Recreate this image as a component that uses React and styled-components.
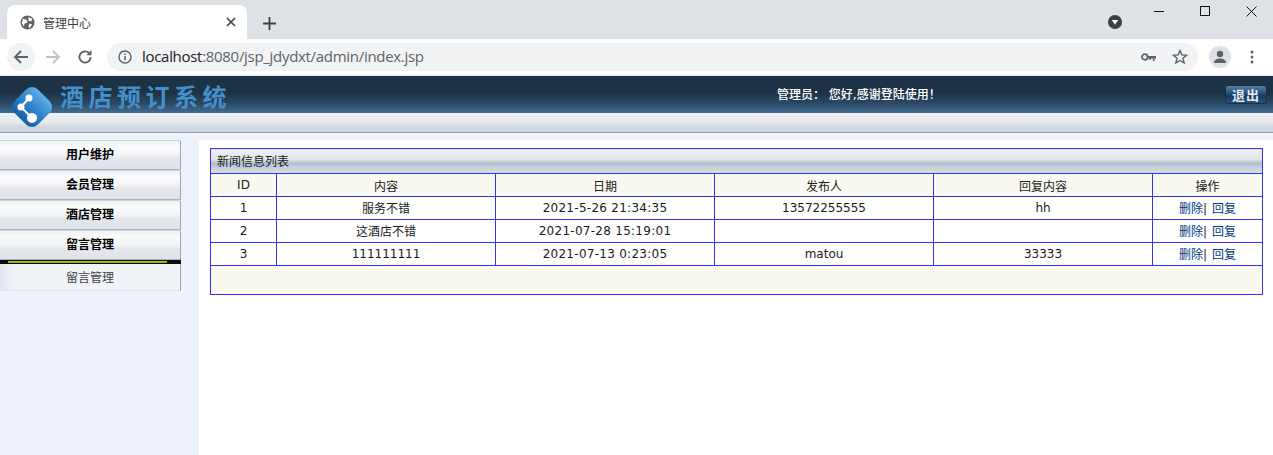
import React from "react";
import styled, { createGlobalStyle } from "styled-components";

const CJK = `"Noto Sans CJK SC", sans-serif`;
const BODY_FONT = `"DejaVu Sans", "Noto Sans CJK SC", sans-serif`;

const GlobalStyle = createGlobalStyle`
  html, body {
    margin: 0;
    padding: 0;
    background: #eef2fb;
    overflow: hidden;
  }
`;

const Page = styled.div`
  width: 1273px;
  height: 455px;
  display: flex;
  flex-direction: column;
  overflow: hidden;
  font-family: ${BODY_FONT};
`;

/* browser chrome */
const TabStrip = styled.div`
  height: 39px;
  flex: none;
  background: #dee1e6;
  display: flex;
  align-items: flex-end;
  padding-left: 7px;
`;

const Tab = styled.div`
  width: 240px;
  height: 34px;
  box-sizing: border-box;
  background: #fff;
  border-radius: 8px 8px 0 0;
  display: flex;
  align-items: center;
  padding: 0 11px 0 13px;
  gap: 8px;
  font: 12px ${CJK};
  color: #3c4043;
`;

const TabTitle = styled.span`
  flex: 1;
`;

const NewTab = styled.div`
  width: 24px;
  height: 24px;
  margin: 0 0 4px 10px;
  display: flex;
  align-items: center;
  justify-content: center;
`;

const StripRight = styled.div`
  margin-left: auto;
  margin-right: -1px;
  align-self: stretch;
  display: flex;
  align-items: flex-start;
`;

const MediaDot = styled.div`
  margin: 15px 14px 0 0;
  display: flex;
`;

const WinButton = styled.div`
  width: 46px;
  height: 22px;
  display: flex;
  align-items: center;
  justify-content: center;
`;

const Toolbar = styled.div`
  height: 37px;
  flex: none;
  box-sizing: border-box;
  background: #fff;
  border-bottom: 1px solid #e4e6ea;
  display: flex;
  align-items: center;
  padding: 0 7px;
`;

const NavButton = styled.div`
  width: 28px;
  height: 28px;
  margin-right: 4px;
  border-radius: 50%;
  background: ${(p) => (p.$hover ? "#f1f3f4" : "transparent")};
  display: flex;
  align-items: center;
  justify-content: center;
`;

const Omnibox = styled.div`
  width: 1091px;
  height: 28px;
  margin-left: 4px;
  box-sizing: border-box;
  background: #f1f3f4;
  border-radius: 14px;
  display: flex;
  align-items: center;
  padding: 0 10px 0 11px;
  gap: 10px;
`;

const UrlText = styled.span`
  flex: 1;
  font: 15px/20px "Open Sans", sans-serif;
  letter-spacing: -0.3px;
  color: #5f6368;
  margin-top: -2px;
`;

const UrlHost = styled.span`
  color: #202124;
`;

const OmniIcons = styled.div`
  display: flex;
  align-items: center;
  gap: 16px;
`;

const ToolbarRight = styled.div`
  margin-left: 11px;
  display: flex;
  align-items: center;
  gap: 19px;
`;

const Avatar = styled.div`
  width: 22px;
  height: 22px;
  border-radius: 50%;
  background: #dee1e6;
  display: flex;
  align-items: center;
  justify-content: center;
`;

/* site header */
const Banner = styled.header`
  height: 37px;
  flex: none;
  background: linear-gradient(#1d3345 0, #1d3345 45%, #2a4a66 75%, #446c92 100%);
  position: relative;
`;

const SubBar = styled.div`
  height: 20px;
  flex: none;
  box-sizing: border-box;
  background: linear-gradient(#f0f1f4 0, #e5e8ed 50%, #d2d9e2 70%, #cfd6e0 100%);
  border-bottom: 1px solid #8d9db4;
`;

const Logo = styled.svg`
  position: absolute;
  left: 11px;
  top: 10px;
  z-index: 1;
`;

const Brand = styled.div`
  padding: 3px 0 0 60px;
  font: 700 24px/34px ${CJK};
  letter-spacing: 4.5px;
  color: #4590ca;
  white-space: nowrap;
`;

const Greeting = styled.div`
  position: absolute;
  left: 777px;
  top: 11px;
  font: 500 12px/16px ${BODY_FONT};
  color: #fff;
  white-space: pre;
`;

const LogoutButton = styled.div`
  position: absolute;
  left: 1225px;
  top: 9px;
  width: 42px;
  height: 19px;
  box-sizing: border-box;
  border: 1px solid #14304e;
  border-radius: 3px;
  background: linear-gradient(#5c7fa3 0, #2c5279 40%, #153a60 60%, #27507a 100%);
  color: #dfeaf5;
  font: 700 13px/17px ${CJK};
  letter-spacing: 1px;
  text-align: center;
`;

/* body */
const Content = styled.div`
  flex: 1;
  display: flex;
  min-height: 0;
  padding-top: 7px;
`;

const Sidebar = styled.aside`
  width: 199px;
  flex: none;
`;

const MenuHeader = styled.div`
  width: 181px;
  height: 30px;
  box-sizing: border-box;
  border: 1px solid #c9d0de;
  border-left: 0;
  border-right-color: #9aa5b5;
  border-bottom-color: #a9b3c3;
  border-radius: 0 2px 0 0;
  background: linear-gradient(#f0f1f4 0, #fbfbfc 20%, #f3f4f6 50%, #e4e7ec 62%, #dfe3e9 100%);
  font: 700 12px/28px ${BODY_FONT};
  color: #000;
  text-align: center;
`;

const MenuDivider = styled.div`
  width: 181px;
  height: 4px;
  box-sizing: border-box;
  padding: 1px 0 0 8px;
  background: #0c0c0c;
`;

const DividerGlow = styled.div`
  width: 159px;
  height: 2px;
  background: linear-gradient(#c2ea00, #6f8e00);
`;

const MenuItem = styled.div`
  width: 181px;
  height: 27px;
  box-sizing: border-box;
  border-right: 1px solid #9aa5b5;
  border-bottom: 1px solid #dfe4ec;
  background: linear-gradient(90deg, #e2e6ec 0, #f0f3f8 14px, #f0f3f8 100%);
  font: 12px/28px ${BODY_FONT};
  color: #444;
  text-align: center;
`;

const Main = styled.main`
  flex: 1;
  background: #fff;
  padding: 8px 10px 0 11px;
`;

const Grid = styled.table`
  width: 1052px;
  border-collapse: collapse;
  table-layout: fixed;
  font: 12px ${BODY_FONT};
  color: #1a1a1a;

  td, th {
    border: 1px solid #3333ff;
    padding: 0;
    text-align: center;
    font-weight: 400;
  }
`;

const TitleCell = styled.td`
  && {
    height: 22px;
    text-align: left;
    padding: 0 0 2px 6px;
    background: linear-gradient(#eef1f4 0, #e0e5ea 42%, #adbcc6 58%, #c0ced6 70%, #d6e2e8 100%);
    color: #222;
  }
`;

const HeadCell = styled.th`
  height: 22px;
  background: #f9f9f1;
`;

const BodyCell = styled.td`
  && {
    height: 21px;
    padding-bottom: 1px;
    letter-spacing: ${(p) => (p.$wide ? "0.27px" : "0")};
    word-spacing: ${(p) => (p.$actions ? "1px" : "0")};
  }
  background: #fff;
`;

const FootCell = styled.td`
  height: 28px;
  background: #f9f9f1;
`;

const ActionLink = styled.a`
  color: #003a80;
  text-decoration: none;
`;

const columns = [
  { name: "ID", width: 66 },
  { name: "内容", width: 219 },
  { name: "日期", width: 219 },
  { name: "发布人", width: 219 },
  { name: "回复内容", width: 219 },
  { name: "操作", width: 110 },
];

const rows = [
  ["1", "服务不错", "2021-5-26 21:34:35", "13572255555", "hh"],
  ["2", "这酒店不错", "2021-07-28 15:19:01", "", ""],
  ["3", "111111111", "2021-07-13 0:23:05", "matou", "33333"],
];

const menus = ["用户维护", "会员管理", "酒店管理", "留言管理"];

const App = () => {
  return (
    <Page>
      <GlobalStyle />
      <TabStrip>
        <Tab>
          <svg width="15" height="15" viewBox="0 0 16 16">
            <circle cx="8" cy="8" r="7.5" fill="#5f6368" />
            <path d="M3 4l4 1 1 3-3 1-1 3-2-3zM9 2l4 2-1 3-3-1zM10 9l3 1-3 4-1-2z" fill="#fff" />
          </svg>
          <TabTitle>管理中心</TabTitle>
          <svg width="10" height="10" viewBox="0 0 10 10">
            <path d="M1 1l8 8M9 1l-8 8" stroke="#3c4043" strokeWidth="1.6" />
          </svg>
        </Tab>
        <NewTab>
          <svg width="13" height="13" viewBox="0 0 13 13">
            <path d="M6.5 0v13M0 6.5h13" stroke="#3c4043" strokeWidth="1.8" />
          </svg>
        </NewTab>
        <StripRight>
          <MediaDot>
            <svg width="14" height="14" viewBox="0 0 14 14">
              <circle cx="7" cy="7" r="7" fill="#3c4043" />
              <path d="M3.6 5h6.8L7 9.6z" fill="#fff" />
            </svg>
          </MediaDot>
          <WinButton>
            <svg width="10" height="10" viewBox="0 0 10 10">
              <path d="M0 5.5h10" stroke="#111" />
            </svg>
          </WinButton>
          <WinButton>
            <svg width="10" height="10" viewBox="0 0 10 10">
              <rect x="0.5" y="0.5" width="9" height="9" fill="none" stroke="#111" />
            </svg>
          </WinButton>
          <WinButton>
            <svg width="11" height="11" viewBox="0 0 11 11">
              <path d="M0.5 0.5l10 10M10.5 0.5l-10 10" stroke="#111" />
            </svg>
          </WinButton>
        </StripRight>
      </TabStrip>

      <Toolbar>
        <NavButton $hover>
          <svg width="16" height="16" viewBox="0 0 16 16">
            <path d="M15 8H2M8 2L2 8l6 6" fill="none" stroke="#5f6368" strokeWidth="1.9" />
          </svg>
        </NavButton>
        <NavButton>
          <svg width="16" height="16" viewBox="0 0 16 16">
            <path d="M1 8h13M8 2l6 6-6 6" fill="none" stroke="#bdc1c6" strokeWidth="1.9" />
          </svg>
        </NavButton>
        <NavButton>
          <svg width="16" height="16" viewBox="0 0 16 16">
            <path d="M13.6 8a5.6 5.6 0 1 1-1.7-4" fill="none" stroke="#5f6368" strokeWidth="1.9" />
            <path d="M14.5 1v5.2H9.3z" fill="#5f6368" />
          </svg>
        </NavButton>
        <Omnibox>
          <svg width="14" height="14" viewBox="0 0 14 14">
            <circle cx="7" cy="7" r="6" fill="none" stroke="#5f6368" strokeWidth="1.4" />
            <path d="M7 6v4.2M7 3.600v1.500" stroke="#5f6368" strokeWidth="1.5" />
          </svg>
          <UrlText>
            <UrlHost>localhost</UrlHost>:8080/jsp_jdydxt/admin/index.jsp
          </UrlText>
          <OmniIcons>
            <svg width="15" height="9" viewBox="0 0 15 9">
              <circle cx="3.8" cy="4" r="2.8" fill="none" stroke="#5f6368" strokeWidth="1.8" />
              <path d="M6.500 3h8.500v2.400h-1.500V8h-1.600V5.400H10V7H8.400V5.400H6.500z" fill="#5f6368" />
            </svg>
            <svg width="16" height="16" viewBox="0 0 16 16">
              <path d="M8 1.600l1.900 4.300 4.600.4-3.500 3 1.100 4.600L8 11.500l-4.100 2.400L5 9.300l-3.500-3 4.600-.4z" fill="none" stroke="#5f6368" strokeWidth="1.4" />
            </svg>
          </OmniIcons>
        </Omnibox>
        <ToolbarRight>
          <Avatar>
            <svg width="14" height="14" viewBox="0 0 14 14">
              <circle cx="7" cy="4" r="3.200" fill="#5f6368" />
              <path d="M1 13c0-3 3-4.400 6-4.400s6 1.400 6 4.400z" fill="#5f6368" />
            </svg>
          </Avatar>
          <svg width="4" height="14" viewBox="0 0 4 14">
            <circle cx="2" cy="2" r="1.500" fill="#5f6368" />
            <circle cx="2" cy="7" r="1.500" fill="#5f6368" />
            <circle cx="2" cy="12" r="1.500" fill="#5f6368" />
          </svg>
        </ToolbarRight>
      </Toolbar>

      <Banner>
        <Logo width="42" height="42" viewBox="0 0 42 42">
          <defs>
            <linearGradient id="logoFill" x1="0" y1="0" x2="0" y2="1">
              <stop offset="0" stopColor="#5aaee8" />
              <stop offset="0.55" stopColor="#2c7fc8" />
              <stop offset="1" stopColor="#1a5fa8" />
            </linearGradient>
          </defs>
          <rect x="4.5" y="4.5" width="33" height="33" rx="8" transform="rotate(45 21 21)" fill="url(#logoFill)" />
          <path d="M18 12L10 21l11 11" fill="none" stroke="#fff" strokeWidth="2" />
          <circle cx="18" cy="12" r="3.500" fill="#fff" />
          <circle cx="10" cy="21" r="3.500" fill="#fff" />
          <circle cx="21" cy="32" r="5" fill="#fff" />
        </Logo>
        <Brand>酒店预订系统</Brand>
        <Greeting>管理员： 您好,感谢登陆使用！</Greeting>
        <LogoutButton>退出</LogoutButton>
      </Banner>
      <SubBar />

      <Content>
        <Sidebar>
          {menus.map((m) => (
            <MenuHeader key={m}>{m}</MenuHeader>
          ))}
          <MenuDivider>
            <DividerGlow />
          </MenuDivider>
          <MenuItem>留言管理</MenuItem>
        </Sidebar>
        <Main>
          <Grid>
            <colgroup>
              {columns.map((c) => (
                <col key={c.name} width={c.width} />
              ))}
            </colgroup>
            <tbody>
              <tr>
                <TitleCell colSpan={6}>新闻信息列表</TitleCell>
              </tr>
              <tr>
                {columns.map((c) => (
                  <HeadCell key={c.name}>{c.name}</HeadCell>
                ))}
              </tr>
              {rows.map((r) => (
                <tr key={r[0]}>
                  {r.map((v, i) => (
                    <BodyCell key={i} $wide={i === 2}>
                      {v}
                    </BodyCell>
                  ))}
                  <BodyCell $actions>
                    <ActionLink href="#">删除</ActionLink>| <ActionLink href="#">回复</ActionLink>
                  </BodyCell>
                </tr>
              ))}
              <tr>
                <FootCell colSpan={6} />
              </tr>
            </tbody>
          </Grid>
        </Main>
      </Content>
    </Page>
  );
};

export default App;
